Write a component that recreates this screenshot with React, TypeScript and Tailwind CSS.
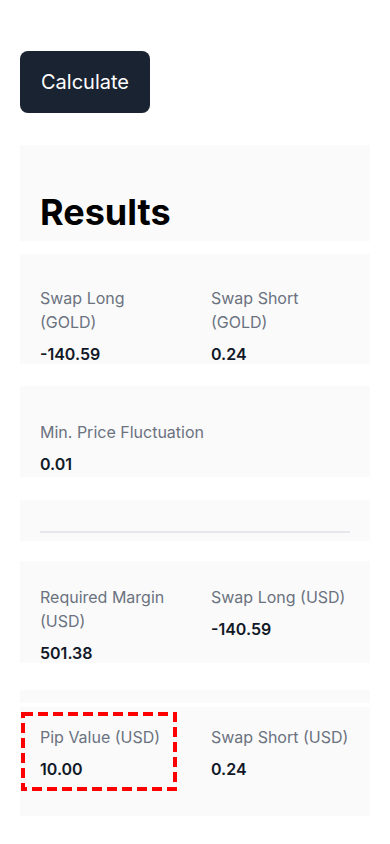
import React from "react";

type Item = { label: string; value: string; marked?: boolean };

function Cell({ item }: { item: Item }) {
  return (
    <div className="relative">
      {item.marked && (
        <svg
          className="absolute left-[-19px] top-[-13px] pointer-events-none"
          width="156"
          height="79"
          viewBox="0 0 156 79"
        >
          <rect x="2" y="2" width="152" height="75" fill="none" stroke="#ff0000" strokeWidth="4" strokeDasharray="10 5" />
        </svg>
      )}
      <div className="text-base leading-6 text-[#6b7280]">{item.label}</div>
      <div className="mt-2 text-base leading-6 font-semibold text-[#111827]">{item.value}</div>
    </div>
  );
}

export default function App() {
  return (
    <div className="min-h-[844px] bg-white px-5 pt-[51px] pb-8 font-['Inter',sans-serif]">
      <button className="h-[62px] w-[130px] rounded-lg bg-[#1a2332] text-xl text-white">Calculate</button>

      <div className="mt-8 h-[96px] bg-[#fafafa] px-5 pt-[47px]">
        <h2 className="text-4xl leading-10 font-bold text-black">Results</h2>
      </div>

      <div className="mt-[13px] h-[110px] overflow-hidden bg-[#fafafa] px-5 pt-8">
        <div className="grid grid-cols-2 gap-x-8">
          <Cell item={{ label: "Swap Long (GOLD)", value: "-140.59" }} />
          <Cell item={{ label: "Swap Short (GOLD)", value: "0.24" }} />
        </div>
      </div>

      <div className="mt-[22px] h-[91px] overflow-hidden bg-[#fafafa] px-5 pt-[34px]">
        <Cell item={{ label: "Min. Price Fluctuation", value: "0.01" }} />
      </div>

      <div className="mt-[23px] h-[41px] bg-[#fafafa] px-5 pt-[31px]">
        <div className="h-[2px] bg-[#e5e7eb]" />
      </div>

      <div className="mt-5 h-[102px] overflow-hidden bg-[#fafafa] px-5 pt-6">
        <div className="grid grid-cols-2 items-start gap-x-8">
          <Cell item={{ label: "Required Margin (USD)", value: "501.38" }} />
          <Cell item={{ label: "Swap Long (USD)", value: "-140.59" }} />
        </div>
      </div>

      <div className="mt-[27px] h-[13px] bg-[#fafafa]" />

      <div className="mt-1 h-[109px] bg-[#fafafa] px-5 pt-[18px]">
        <div className="grid grid-cols-2 gap-x-8">
          <Cell item={{ label: "Pip Value (USD)", value: "10.00", marked: true }} />
          <Cell item={{ label: "Swap Short (USD)", value: "0.24" }} />
        </div>
      </div>
    </div>
  );
}
